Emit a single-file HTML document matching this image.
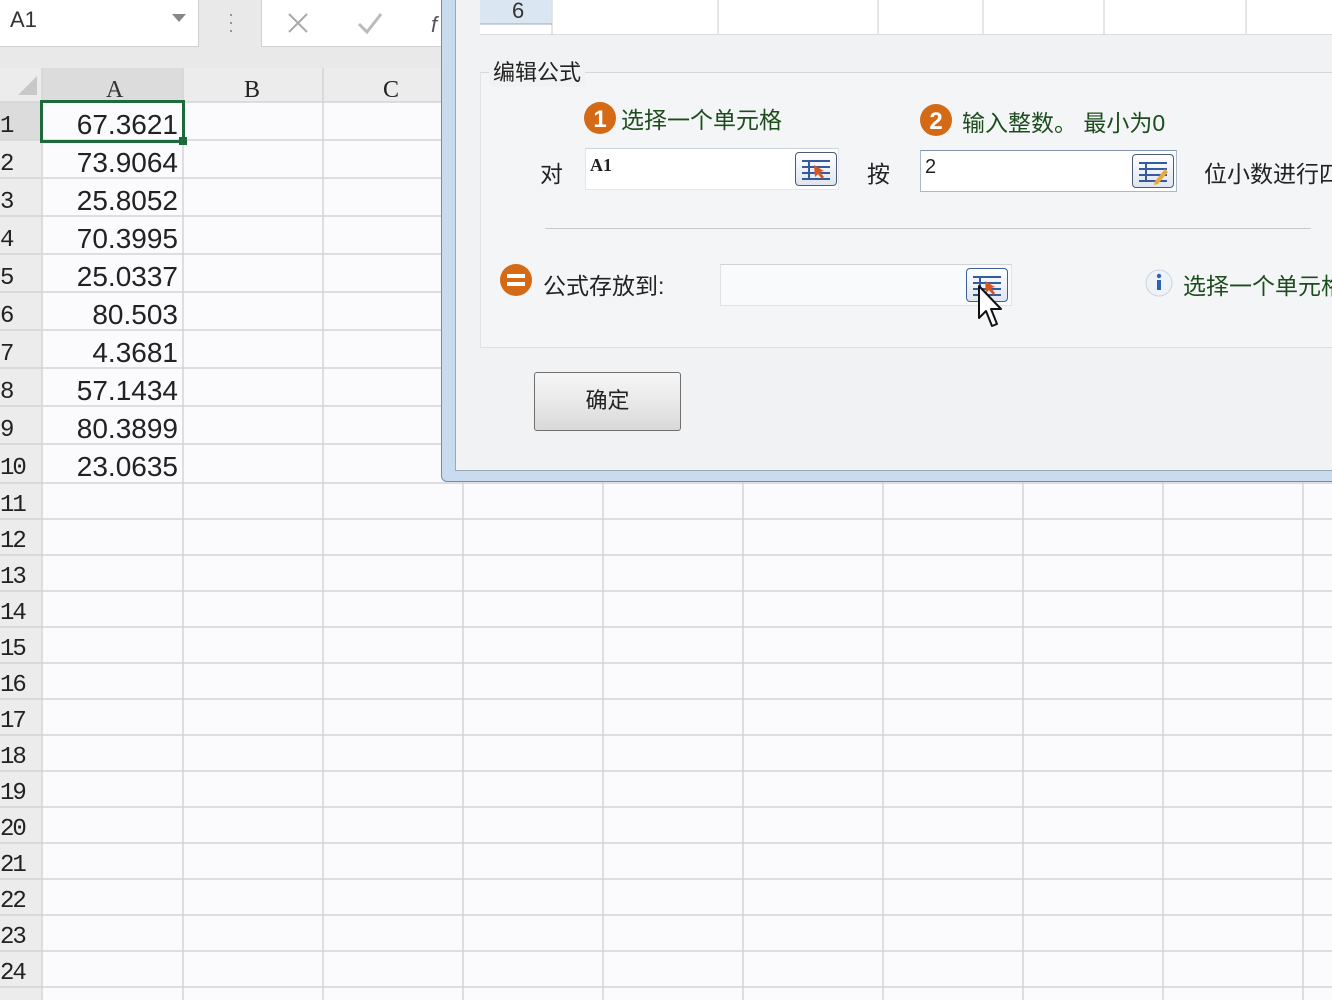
<!DOCTYPE html>
<html><head><meta charset="utf-8"><style>
body{margin:0;width:1332px;height:1000px;overflow:hidden;background:#fbfbfd;font-family:"Liberation Sans","Noto Sans CJK SC",sans-serif;position:relative}
.abs{position:absolute}
.num{position:absolute;left:42px;width:136px;text-align:right;font-size:28px;color:#222;letter-spacing:0}
.rn{position:absolute;left:0;font-size:24px;color:#222;font-family:"Liberation Mono",monospace;letter-spacing:-2px}
.cjk{font-family:"Liberation Sans","Noto Sans CJK SC",sans-serif}
.btn{position:absolute;width:40px;height:32px;border:1.5px solid #4a5a78;border-radius:4px;background:linear-gradient(#fff,#dfe6f0)}
</style></head><body>
<div class="abs" style="left:0;top:0;width:441px;height:68px;background:#e9e9ea"></div>
<div class="abs" style="left:0;top:0;width:198px;height:46px;background:#fff;border-right:1px solid #d0d0d0;border-bottom:1px solid #d0d0d0"></div>
<div class="abs" style="left:10px;top:7px;font-size:22px;color:#333">A1</div>
<div class="abs" style="left:172px;top:14px;width:0;height:0;border-left:7px solid transparent;border-right:7px solid transparent;border-top:8px solid #888"></div>
<div class="abs" style="left:228px;top:10px;color:#888;font-size:18px;line-height:8px">·<br>·<br>·</div>
<div class="abs" style="left:261px;top:0;width:180px;height:46px;background:#fff;border-left:1px solid #d0d0d0;border-bottom:1px solid #d0d0d0"></div>
<svg class="abs" style="left:285px;top:10px" width="160" height="26"><path d="M4 4L22 22M22 4L4 22" stroke="#aaa" stroke-width="2"/><path d="M74 14l8 8 14-18" stroke="#bbb" stroke-width="3" fill="none"/><text x="146" y="22" font-size="22" fill="#555" font-style="italic">f</text></svg>
<svg class="abs" style="left:0;top:0" width="1332" height="1000">
<rect x="0" y="68" width="441" height="34" fill="#ececec"/>
<rect x="42" y="68" width="141" height="34" fill="#dcdcdc"/>
<rect x="0" y="102" width="42" height="898" fill="#ececec"/>
<rect x="0" y="102" width="42" height="38" fill="#dcdcdc"/>
<path d="M37 76L37 95L18 95Z" fill="#c8c8c8"/>
<g stroke="#d4d4d8" stroke-width="1.5">
<path d="M42 68V1000M183 68V1000M323 68V1000M463 482V1000M603 482V1000M743 482V1000M883 482V1000M1023 482V1000M1163 482V1000M1303 482V1000"/>
<path d="M0 102H1332M0 140H1332M0 178H1332M0 216H1332M0 254H1332M0 292H1332M0 330H1332M0 368H1332M0 406H1332M0 444H1332M0 483H1332M0 519H1332M0 555H1332M0 591H1332M0 627H1332M0 663H1332M0 699H1332M0 735H1332M0 771H1332M0 807H1332M0 843H1332M0 879H1332M0 915H1332M0 951H1332M0 987H1332"/>
</g>
<rect x="41.5" y="101.5" width="142" height="40" fill="none" stroke="#1e6a3d" stroke-width="3"/>
<rect x="179" y="137" width="8" height="8" fill="#1e6a3d"/>
<text x="106" y="97" font-size="24" fill="#333" font-family="Liberation Serif">A</text>
<text x="244" y="97" font-size="24" fill="#222" font-family="Liberation Serif">B</text>
<text x="383" y="97" font-size="24" fill="#222" font-family="Liberation Serif">C</text>
</svg>
<div class="num" style="top:109px">67.3621</div>
<div class="num" style="top:147px">73.9064</div>
<div class="num" style="top:185px">25.8052</div>
<div class="num" style="top:223px">70.3995</div>
<div class="num" style="top:261px">25.0337</div>
<div class="num" style="top:299px">80.503</div>
<div class="num" style="top:337px">4.3681</div>
<div class="num" style="top:375px">57.1434</div>
<div class="num" style="top:413px">80.3899</div>
<div class="num" style="top:451px">23.0635</div>
<div class="rn" style="top:113px">1</div><div class="rn" style="top:151px">2</div><div class="rn" style="top:189px">3</div><div class="rn" style="top:227px">4</div><div class="rn" style="top:265px">5</div><div class="rn" style="top:303px">6</div><div class="rn" style="top:341px">7</div><div class="rn" style="top:379px">8</div><div class="rn" style="top:417px">9</div><div class="rn" style="top:455px">10</div>
<div class="rn" style="top:492px">11</div><div class="rn" style="top:528px">12</div><div class="rn" style="top:564px">13</div><div class="rn" style="top:600px">14</div><div class="rn" style="top:636px">15</div><div class="rn" style="top:672px">16</div><div class="rn" style="top:708px">17</div><div class="rn" style="top:744px">18</div><div class="rn" style="top:780px">19</div><div class="rn" style="top:816px">20</div><div class="rn" style="top:852px">21</div><div class="rn" style="top:888px">22</div><div class="rn" style="top:924px">23</div><div class="rn" style="top:960px">24</div>
<div class="abs" style="left:441px;top:-10px;width:900px;height:492px;background:#c9dcef;border:1px solid #6f8eb0;border-radius:6px;box-sizing:border-box"></div>
<div class="abs" style="left:455px;top:0;width:877px;height:470px;background:#f1f2f4;border-left:1px solid #9aa9ba;border-bottom:1px solid #9aa9ba"></div>
<div class="abs" style="left:480px;top:0;width:852px;height:34px;background:#fff;border-bottom:1px solid #ddd"></div>
<div class="abs" style="left:480px;top:0;width:72px;height:24px;background:#dbe6f3"></div>
<div class="abs" style="left:512px;top:-2px;font-size:22px;color:#333">6</div>
<svg class="abs" style="left:480px;top:0" width="852" height="36"><path d="M72 0V34M238 0V34M398 0V34M503 0V34M624 0V34M766 0V34" stroke="#ddd" stroke-width="1.5"/><path d="M0 24H72" stroke="#9ab" stroke-width="1"/></svg>
<div class="abs" style="left:480px;top:72px;width:860px;height:274px;border-top:1px solid #d4d6da;border-bottom:1px solid #dde;border-left:1px solid #e2e3e6;background:#f4f5f6"></div>
<div class="abs cjk" style="left:489px;top:55px;font-size:22px;color:#222;background:#f1f2f4;padding:0 4px">编辑公式</div>
<svg class="abs" style="left:583px;top:100px" width="36" height="36"><circle cx="17" cy="18" r="16" fill="#d46a16"/><text x="17" y="27" text-anchor="middle" font-size="24" font-weight="bold" fill="#fff">1</text></svg>
<div class="abs cjk" style="left:621px;top:101px;font-size:23px;color:#1d4d1d">选择一个单元格</div>
<svg class="abs" style="left:918px;top:102px" width="36" height="36"><circle cx="18" cy="18" r="16" fill="#d46a16"/><text x="18" y="27" text-anchor="middle" font-size="24" font-weight="bold" fill="#fff">2</text></svg>
<div class="abs cjk" style="left:962px;top:104px;font-size:23px;color:#1d4d1d">输入整数。 最小为0</div>
<div class="abs cjk" style="left:540px;top:155px;font-size:23px;color:#222">对</div>
<div class="abs" style="left:585px;top:148px;width:252px;height:40px;background:#fff;border:1px solid #e4e6ea;border-top-color:#cfd3d8"></div>
<div class="abs" style="left:590px;top:155px;font-size:18px;font-weight:bold;color:#222;font-family:'Liberation Serif'">A1</div>
<div class="btn" style="left:795px;top:152px"><svg width="40" height="32"><path d="M6 8H34M6 14H34M6 20H34M6 26H34M13 8V26" stroke="#3659a0" stroke-width="2"/><path d="M18 12l10 6-4 1 4 5-2 2-4-5-3 3z" fill="#d9541a"/></svg></div>
<div class="abs cjk" style="left:867px;top:155px;font-size:23px;color:#222">按</div>
<div class="abs" style="left:920px;top:150px;width:255px;height:40px;background:#fff;border:1.5px solid #aab8cc;border-top-color:#7f93b0"></div>
<div class="abs" style="left:925px;top:156px;font-size:20px;color:#222">2</div>
<div class="btn" style="left:1132px;top:154px"><svg width="40" height="32"><path d="M6 8H34M6 14H34M6 20H34M6 26H34M13 8V26" stroke="#3659a0" stroke-width="2"/><path d="M22 26l10-12 3 3-10 12-4 1z" fill="#e8a93a"/></svg></div>
<div class="abs cjk" style="left:1204px;top:155px;font-size:23px;color:#222;white-space:nowrap">位小数进行四</div>
<div class="abs" style="left:545px;top:228px;width:766px;height:1px;background:#c8cacd"></div>
<svg class="abs" style="left:498px;top:262px" width="38" height="38"><circle cx="18" cy="18" r="16" fill="#d46a16"/><rect x="9" y="12" width="18" height="4" fill="#fff"/><rect x="9" y="20" width="18" height="4" fill="#fff"/></svg>
<div class="abs cjk" style="left:543px;top:267px;font-size:23px;color:#222">公式存放到:</div>
<div class="abs" style="left:720px;top:264px;width:290px;height:40px;background:#f9fafb;border:1px solid #dfe2e6;border-top-color:#cfd3d8"></div>
<div class="btn" style="left:966px;top:268px;border-color:#3d5f99"><svg width="40" height="32"><path d="M6 8H34M6 14H34M6 20H34M6 26H34M13 8V26" stroke="#3659a0" stroke-width="2"/><path d="M18 12l10 6-4 1 4 5-2 2-4-5-3 3z" fill="#d9541a"/></svg></div>
<svg class="abs" style="left:976px;top:284px" width="30" height="48"><path d="M3 2V34L10 27L16 42L21 40L15 25H25Z" fill="#fff" stroke="#111" stroke-width="2" stroke-linejoin="round"/></svg>
<svg class="abs" style="left:1144px;top:268px" width="30" height="30"><circle cx="15" cy="15" r="13" fill="#eef3f9" stroke="#c9d3df"/><rect x="13" y="12" width="4" height="10" fill="#2a63b6"/><circle cx="15" cy="8" r="2.2" fill="#2a63b6"/></svg>
<div class="abs cjk" style="left:1183px;top:267px;font-size:23px;color:#1d4d1d;white-space:nowrap">选择一个单元格</div>
<div class="abs cjk" style="left:534px;top:372px;width:145px;height:57px;border:1.5px solid #6f6f6f;border-radius:3px;background:linear-gradient(#f6f6f6,#e9e9e9 50%,#d9d9d9);text-align:center;line-height:56px;font-size:22px;color:#222">确定</div>
</body></html>
